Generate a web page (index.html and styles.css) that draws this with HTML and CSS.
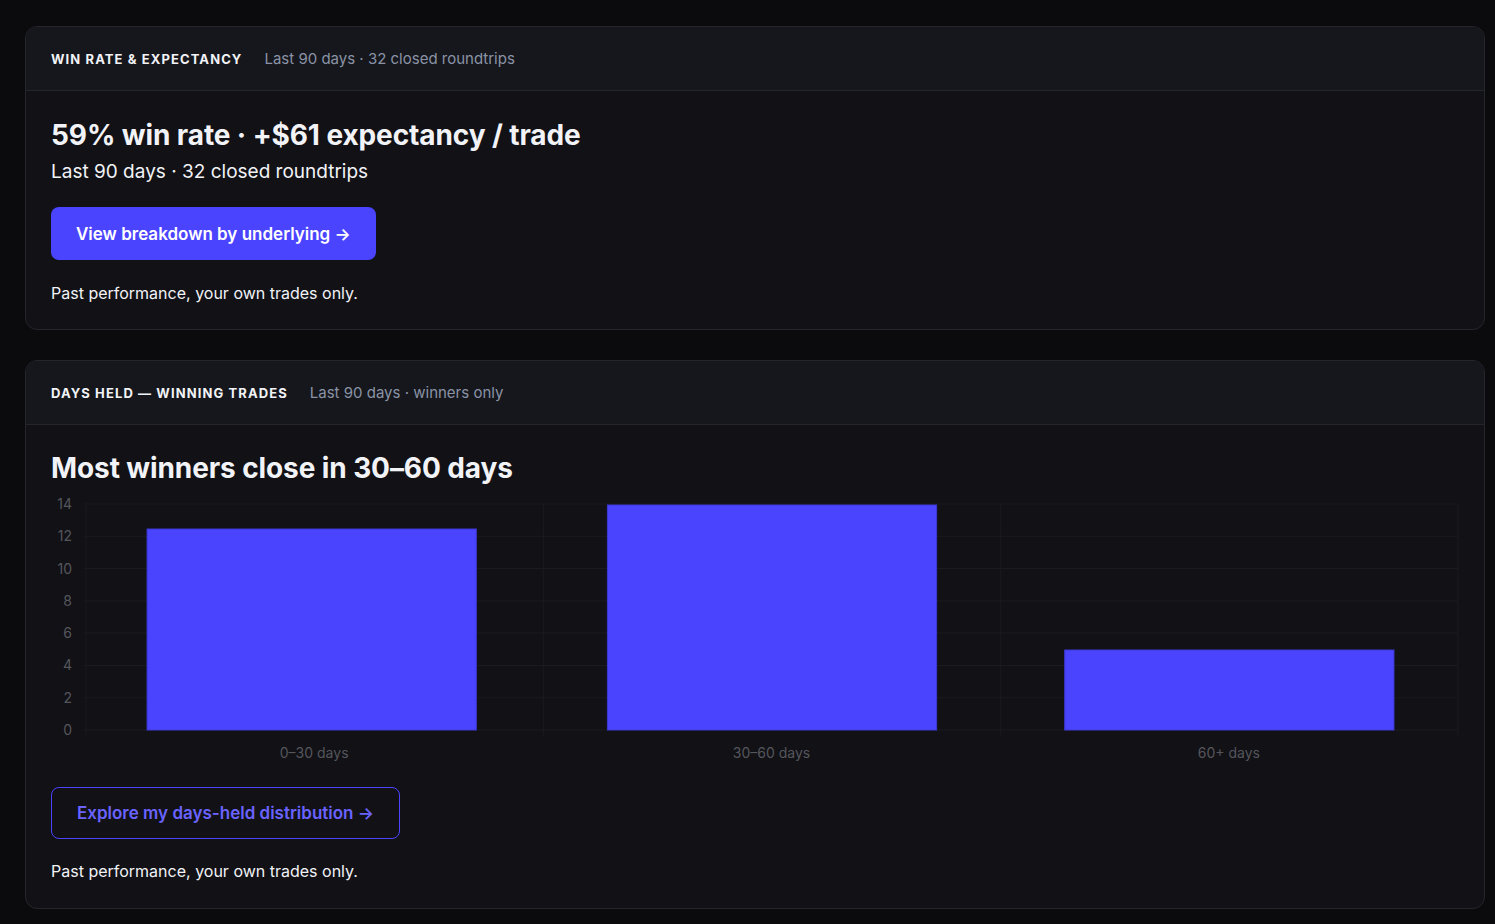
FILE: index.html
```html
<!DOCTYPE html>
<html lang="en">
<head>
    <meta charset="UTF-8">
    <meta name="viewport" content="width=device-width, initial-scale=1.0">
    <title>Performance</title>
    <link rel="stylesheet" href="styles.css">
</head>
<body>
    <div class="card">
        <div class="card-header">
            <h2>Win rate &amp; expectancy</h2>
            <span class="card-sub">Last 90 days · 32 closed roundtrips</span>
        </div>
        <div class="card-body">
            <h1 class="headline">59% win rate · +$61 expectancy / trade</h1>
            <p class="subline">Last 90 days · 32 closed roundtrips</p>
            <a class="btn btn-primary" href="#">View breakdown by underlying →</a>
            <p class="note">Past performance, your own trades only.</p>
        </div>
    </div>

    <div class="card">
        <div class="card-header">
            <h2>Days held — winning trades</h2>
            <span class="card-sub">Last 90 days · winners only</span>
        </div>
        <div class="card-body card-body-chart">
            <h1 class="headline">Most winners close in 30–60 days</h1>
            <svg class="chart" viewBox="0 0 1407 272" preserveAspectRatio="none">
                <g class="grid">
                    <line x1="33" y1="13" x2="1406" y2="13"/>
                    <line x1="33" y1="45.3" x2="1406" y2="45.3"/>
                    <line x1="33" y1="77.6" x2="1406" y2="77.6"/>
                    <line x1="33" y1="109.9" x2="1406" y2="109.9"/>
                    <line x1="33" y1="142.1" x2="1406" y2="142.1"/>
                    <line x1="33" y1="174.4" x2="1406" y2="174.4"/>
                    <line x1="33" y1="206.7" x2="1406" y2="206.7"/>
                    <line x1="33" y1="239" x2="1406" y2="239"/>
                    <line x1="35" y1="13" x2="35" y2="246"/>
                    <line x1="492" y1="13" x2="492" y2="246"/>
                    <line x1="949" y1="13" x2="949" y2="246"/>
                    <line x1="1406" y1="13" x2="1406" y2="246"/>
                </g>
                <g class="y-labels">
                    <text x="21" y="18">14</text>
                    <text x="21" y="50.3">12</text>
                    <text x="21" y="82.6">10</text>
                    <text x="21" y="114.9">8</text>
                    <text x="21" y="147.1">6</text>
                    <text x="21" y="179.4">4</text>
                    <text x="21" y="211.7">2</text>
                    <text x="21" y="244">0</text>
                </g>
                <g class="bars">
                    <rect x="96" y="38" width="329" height="201"/>
                    <rect x="556" y="14" width="329" height="225"/>
                    <rect x="1013" y="159" width="329" height="80"/>
                </g>
                <g class="x-labels">
                    <text x="263" y="267">0–30 days</text>
                    <text x="720" y="267">30–60 days</text>
                    <text x="1177" y="267">60+ days</text>
                </g>
            </svg>
            <a class="btn btn-outline" href="#">Explore my days-held distribution →</a>
            <p class="note">Past performance, your own trades only.</p>
        </div>
    </div>
</body>
</html>
```

FILE: styles.css
```css
* {
    margin: 0;
    padding: 0;
    box-sizing: border-box;
    font-family: Inter, "Noto Sans", sans-serif;
}

body {
    background-color: #0b0b0d;
    padding: 26px 10px 0 25px;
    color: #f2f3f7;
}

.card {
    background-color: #111116;
    border: 1px solid #25262b;
    border-radius: 12px;
    margin-bottom: 30px;
    overflow: hidden;
}

.card-header {
    display: flex;
    align-items: center;
    gap: 22px;
    height: 64px;
    padding: 0 25px;
    background-color: #16171c;
    border-bottom: 1px solid #25262b;
}

.card-header h2 {
    font-size: 13px;
    font-weight: 700;
    text-transform: uppercase;
    letter-spacing: 1.1px;
    color: #f2f3f7;
}

.card-sub {
    font-size: 15px;
    color: #8a93a6;
}

.card-body {
    padding: 27px 25px 25px;
}

.card-body-chart {
    padding-bottom: 26px;
}

.headline {
    font-size: 28px;
    line-height: 34px;
    font-weight: 700;
    letter-spacing: -0.1px;
}

.card-body-chart .headline {
    margin-top: -1px;
}

.subline {
    font-size: 19px;
    line-height: 26px;
    margin-top: 7px;
}

.btn {
    display: inline-flex;
    align-items: center;
    height: 53px;
    padding: 0 25px;
    border-radius: 8px;
    font-size: 17px;
    font-weight: 600;
    text-decoration: none;
    margin-top: 22px;
}

.btn-primary {
    background-color: #4b44ff;
    color: #ffffff;
}

.btn-outline {
    border: 1px solid #4b44ff;
    color: #6a63ff;
    height: 52px;
    margin-top: 24px;
}

.note {
    font-size: 16px;
    line-height: 22px;
    margin-top: 22px;
    color: #f2f3f7;
}

.btn-outline + .note {
    margin-top: 21px;
}

.chart {
    display: block;
    width: 100%;
    height: 272px;
    margin-top: 6px;
}

.grid line {
    stroke: #1a1a1f;
    stroke-width: 1;
}

.y-labels text {
    font-size: 14px;
    fill: #55565c;
    text-anchor: end;
}

.x-labels text {
    font-size: 14px;
    fill: #55565c;
    text-anchor: middle;
}

.bars rect {
    fill: #4b44ff;
    stroke: #3e39d6;
    stroke-width: 1;
}
```
